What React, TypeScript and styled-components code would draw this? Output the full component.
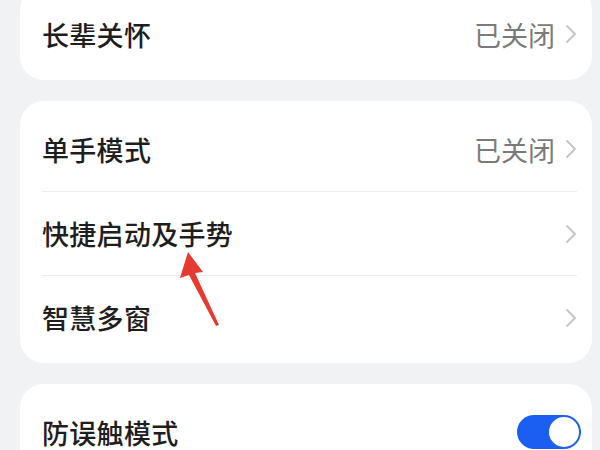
import React from "react";
import styled, { createGlobalStyle } from "styled-components";

const GlobalStyle = createGlobalStyle`
  html, body {
    margin: 0;
    padding: 0;
    background: #f1f2f4;
    font-family: "Noto Sans CJK SC", "Noto Sans", sans-serif;
  }
  body {
    width: 600px;
    height: 450px;
    overflow: hidden;
  }
`;

const Screen = styled.div`
  height: 450px;
  overflow: hidden;
`;

const Page = styled.div`
  position: relative;
  display: flex;
  flex-direction: column;
  gap: 21px;
  padding: 0 8px 0 20px;
  margin-top: -14px;
`;

const Card = styled.div`
  background: #fff;
  border-radius: 24px;
  padding: 6px 15px 4px 22px;
`;

const Row = styled.div<{ $divider?: boolean }>`
  height: 84px;
  display: flex;
  align-items: center;
  justify-content: space-between;
  border-top: ${(p) => (p.$divider ? "1px solid #ececec" : "none")};
  box-sizing: border-box;
`;

const Label = styled.span`
  font-size: 27px;
  font-weight: 500;
  color: #1e1e1e;
  letter-spacing: 0.3px;
`;

const Right = styled.div`
  display: flex;
  align-items: center;
  gap: 10px;
`;

const Value = styled.span`
  font-size: 27px;
  color: #7a7a7a;
`;

const Chevron = () => (
  <svg width="12" height="22" viewBox="0 0 12 22">
    <path d="M2 3 L10 11 L2 19" fill="none" stroke="#c4c4c4" strokeWidth="1.8" strokeLinecap="round" strokeLinejoin="round" />
  </svg>
);

const Toggle = styled.div<{ $on?: boolean }>`
  width: 64px;
  height: 34px;
  border-radius: 17px;
  background: ${(p) => (p.$on ? "#1b5ff2" : "#d9d9d9")};
  display: flex;
  align-items: center;
  justify-content: ${(p) => (p.$on ? "flex-end" : "flex-start")};
  padding: 0 2px;
  box-sizing: border-box;
  margin-right: -4px;
`;

const Knob = styled.div`
  width: 30px;
  height: 30px;
  border-radius: 50%;
  background: #fff;
  box-shadow: 0 0 0 1px #2a63e0;
`;

const Arrow = styled.svg`
  position: absolute;
  left: 176px;
  top: 260px;
  pointer-events: none;
`;

type Item = { label: string; value?: string };

const group: Item[] = [
  { label: "单手模式", value: "已关闭" },
  { label: "快捷启动及手势" },
  { label: "智慧多窗" },
];

export default function App() {
  return (
    <Screen>
      <GlobalStyle />
      <Page>
        <Card>
          <Row>
            <Label>长辈关怀</Label>
            <Right>
              <Value>已关闭</Value>
              <Chevron />
            </Right>
          </Row>
        </Card>

        <Card>
          {group.map((item, i) => (
            <Row key={item.label} $divider={i > 0}>
              <Label>{item.label}</Label>
              <Right>
                {item.value && <Value>{item.value}</Value>}
                <Chevron />
              </Right>
            </Row>
          ))}
        </Card>

        <Card>
          <Row>
            <Label>防误触模式</Label>
            <Toggle $on>
              <Knob />
            </Toggle>
          </Row>
        </Card>

        {/* red annotation arrow */}
        <Arrow width="60" height="90" viewBox="0 0 60 90">
          <polygon points="12,6 4,32 13,29 40,80 43,79 19,27 27,26" fill="#e63a30" />
        </Arrow>
      </Page>
    </Screen>
  );
}
